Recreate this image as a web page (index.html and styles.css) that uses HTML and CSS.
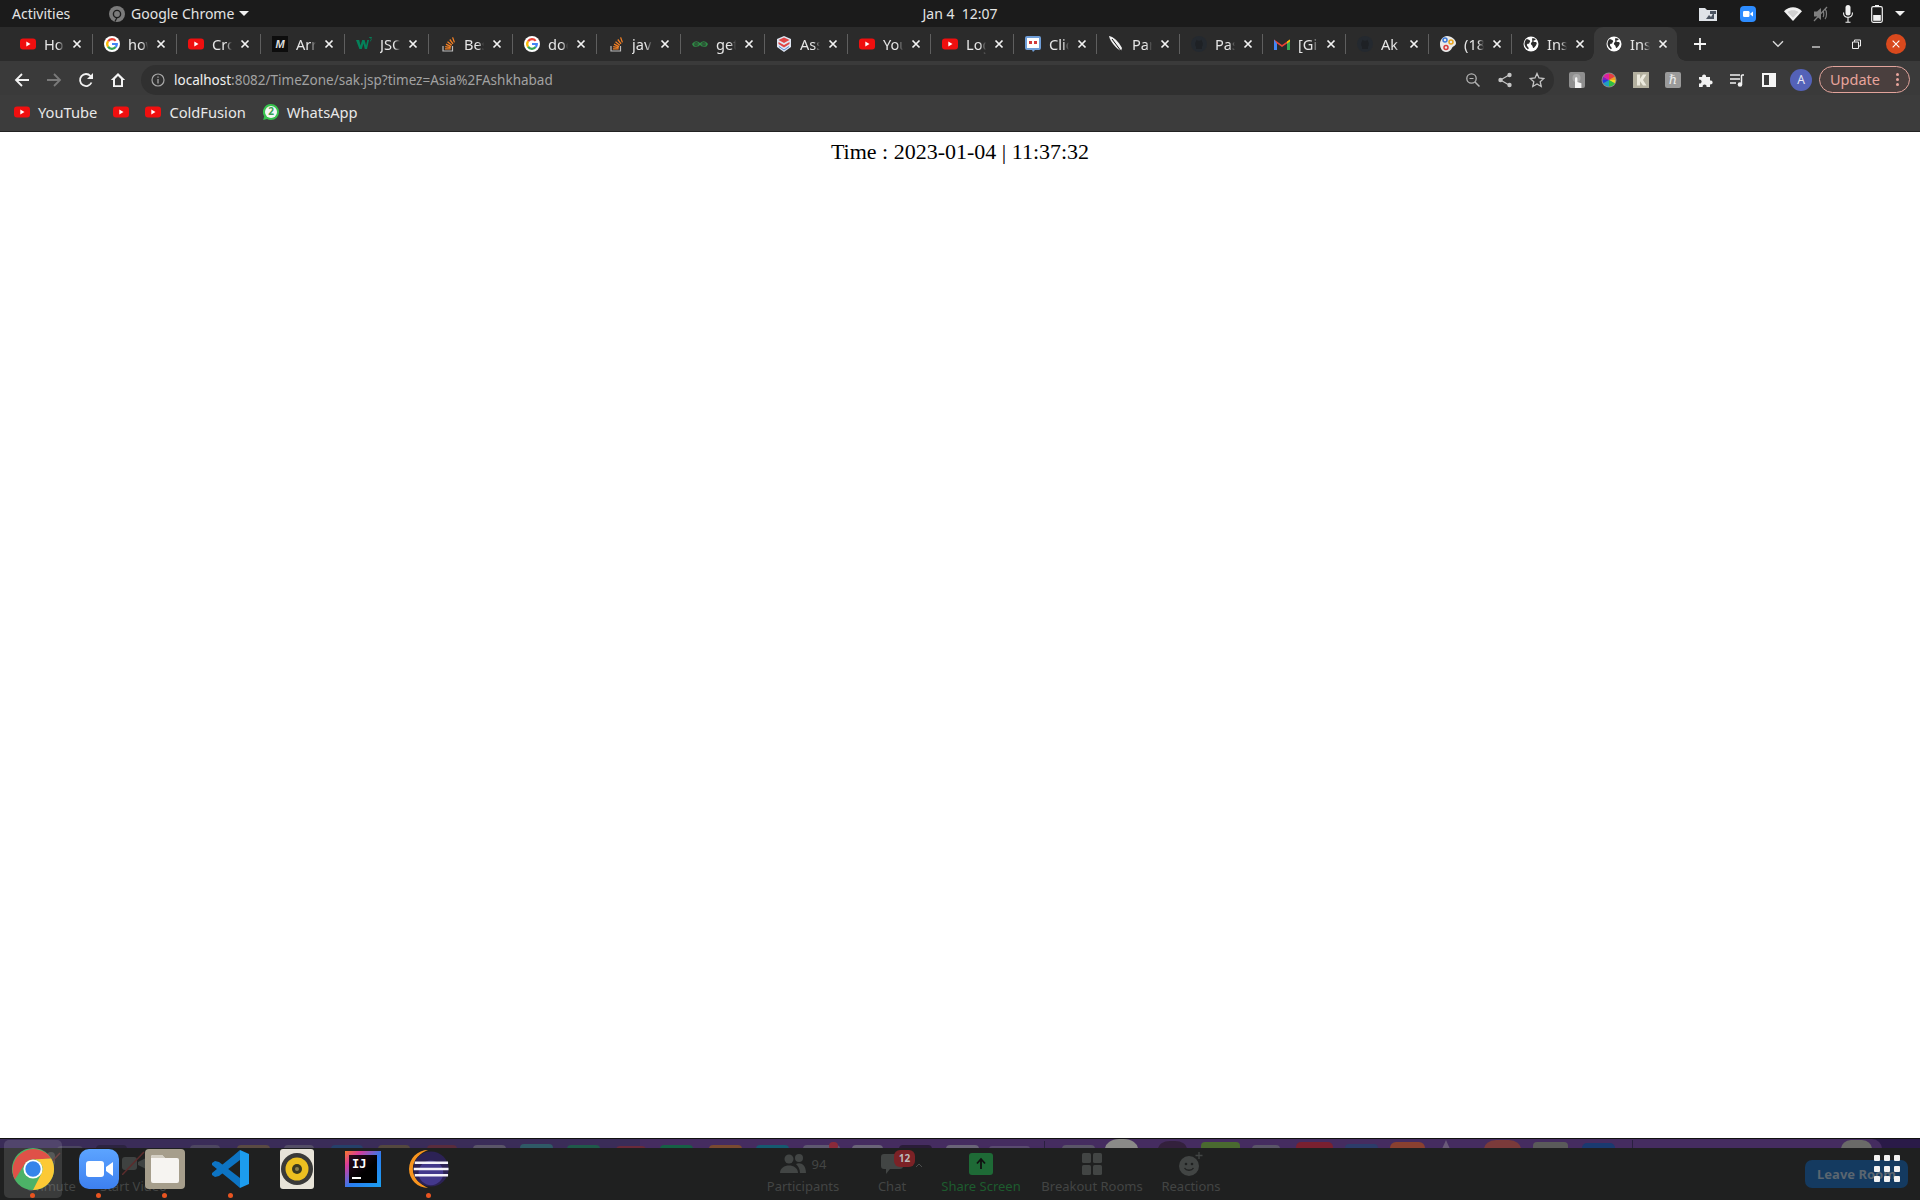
FILE: index.html
```html
<!DOCTYPE html>
<html lang="en">
<head>
<meta charset="utf-8">
<title>TimeZone</title>
<link rel="stylesheet" href="styles.css">
</head>
<body>
<svg class="defs" width="0" height="0" aria-hidden="true">
  <symbol id="yt" viewBox="0 0 16 16"><rect x="0" y="2.5" width="16" height="11" rx="3" fill="#f00f0f"/><path d="M6.3 5.6v4.8L10.5 8z" fill="#fff"/></symbol>
  <symbol id="goog" viewBox="0 0 16 16"><circle cx="8" cy="8" r="8" fill="#fff"/><g fill="none" stroke-width="2.200"><path d="M4.070 5.250A4.800 4.800 0 0 1 11.680 4.910" stroke="#ea4335"/><path d="M4.070 5.250A4.800 4.800 0 0 0 4.070 10.750" stroke="#fbbc05"/><path d="M4.070 10.750A4.800 4.800 0 0 0 11.700 11.050" stroke="#34a853"/><path d="M8 8H12.800A4.800 4.800 0 0 1 11.700 11.050" stroke="#4285f4"/></g></symbol>
  <symbol id="so" viewBox="0 0 16 16"><path d="M3 10v5h9.500v-5" fill="none" stroke="#bcbbbb" stroke-width="1.200"/><path d="M5 12.800h5.600M5.200 10.700l5.500 1M6 8.200l5 2.400M7.500 5.800l4.300 3.400M9.800 3.500l3.200 4.400M12.600 1.400l1.800 5" fill="none" stroke="#f48024" stroke-width="1.300"/></symbol>
  <symbol id="globe" viewBox="0 0 16 16"><circle cx="8" cy="8" r="7.500" fill="#fff"/><path d="M3 3.500c1.500-.5 3 .3 4 1.200.6 1-.6 1.400-.6 2.400s-1.800.2-2.400 1.400c-.6 1 1.200 2.400 1.600 3.200.3 1-.4 1.600-.8 1.600A6.600 6.600 0 0 1 3 3.500zM9.500 2c1 .7 2.700.4 3.200 1.400-.4 1-2 .5-2.400 1.400-.2.8 1 1.200 1.800 1.200s1.900.5 1.600 1.600c-.3 1.400-1.300 2.900-2.900 4.400-.9.2-1.200-1-1.300-2-.2-1-1.600-1-1.600-2.300 0-1.200 1-1.500 1.500-2.300C9.300 4.500 8.700 3 9.500 2z" fill="#2c2c2c"/></symbol>
  <symbol id="gh" viewBox="0 0 16 16"><circle cx="8" cy="8" r="8" fill="#24292f"/><path d="M5 13V10.800C3.800 9.500 4 6.500 5 5.500L5.500 3.800 7 4.800h2L10.500 3.800 11 5.500c1 1 1.200 4 0 5.300V13z" fill="#1e2125"/></symbol>
  <symbol id="x" viewBox="0 0 12 12"><path d="M2.500 2.500l7 7M9.500 2.500l-7 7" stroke="#f2f2f2" stroke-width="1.700" fill="none"/></symbol>
</svg>

<header class="topbar">
  <div class="top-left">
    <span class="activities">Activities</span>
    <svg class="chrome-glyph" viewBox="0 0 16 16"><circle cx="8" cy="8" r="8" fill="#7b7b7b"/><circle cx="8" cy="8" r="3.600" fill="none" stroke="#1c1c1c" stroke-width="1.400"/><path d="M8 11.600 6 15.600" stroke="#1c1c1c" stroke-width="1.200"/></svg>
    <span class="appname">Google Chrome</span>
    <span class="caret"></span>
  </div>
  <div class="clock">Jan 4&nbsp;&nbsp;12:07</div>
  <div class="tray">
    <svg class="tray-folder" viewBox="0 0 20 16"><path d="M1 2h6l2 2h10v11H1z" fill="#dfe3e8"/><path d="M8 13l3-4 2 2 3-5v7z" fill="#4a5360"/><rect x="12" y="5" width="6" height="3" fill="#4a5360"/></svg>
    <svg class="tray-zoom" viewBox="0 0 16 16"><rect width="16" height="16" rx="4" fill="#2d8cff"/><rect x="3" y="5" width="6.500" height="6" rx="1.200" fill="#fff"/><path d="M10.300 7.500 13 5.500v5l-2.700-2z" fill="#fff"/></svg>
    <svg class="tray-wifi" viewBox="0 0 18 14"><path d="M0 4.200C5-1 13-1 18 4.200L9 14z" fill="#f1f1f1"/><path d="M3.500 5C6.500 2.800 11.500 2.800 14.500 5L9 10.800z" fill="#1c1c1c" opacity=".15"/></svg>
    <svg class="tray-speaker" viewBox="0 0 16 16"><path d="M1 5.500h3L8 2v12l-4-3.500H1z" fill="#7f7f7f"/><path d="M10 5c1 1 1 5 0 6M12 3c2 2 2 8 0 10" stroke="#7f7f7f" stroke-width="1.200" fill="none"/><path d="M1 15 14 1" stroke="#7f7f7f" stroke-width="1.200"/></svg>
    <svg class="tray-mic" viewBox="0 0 12 18"><rect x="3.500" y="0" width="5" height="10.500" rx="2.500" fill="#f1f1f1"/><path d="M1.500 7.500c0 6.500 9 6.500 9 0M6 12.500V17M3.500 17.300h5" stroke="#f1f1f1" stroke-width="1.100" fill="none"/></svg>
    <svg class="tray-batt" viewBox="0 0 12 18"><rect x="4" y="0" width="4" height="2" fill="#f1f1f1"/><rect x=".7" y="1.700" width="10.600" height="15.600" rx="1.500" fill="none" stroke="#f1f1f1" stroke-width="1.200"/><rect x="2.200" y="10" width="7.600" height="5.800" fill="#f1f1f1"/></svg>
    <span class="caret tray-caret"></span>
  </div>
</header>

<nav class="tabstrip">
  <div class="tab"><svg class="fav"><use href="#yt"/></svg><span class="title">Ho</span><svg class="close"><use href="#x"/></svg><i class="sep"></i></div>
  <div class="tab"><svg class="fav"><use href="#goog"/></svg><span class="title">how</span><svg class="close"><use href="#x"/></svg><i class="sep"></i></div>
  <div class="tab"><svg class="fav"><use href="#yt"/></svg><span class="title">Cro</span><svg class="close"><use href="#x"/></svg><i class="sep"></i></div>
  <div class="tab"><span class="fav fav-m">M</span><span class="title">Arr</span><svg class="close"><use href="#x"/></svg><i class="sep"></i></div>
  <div class="tab"><svg class="fav" viewBox="0 0 16 16"><path d="M0 4h3.200l1.300 5.500L6.200 4h2.400l1.500 5.500L11.300 4H13l-2 9H8.800L7.400 7.500 5.800 13H3.400z" fill="#04825a"/><path d="M13.200 1.500h2.500l-1 1.400c1 .3.700 2-.8 2" fill="none" stroke="#04825a" stroke-width=".9"/></svg><span class="title">JSON</span><svg class="close"><use href="#x"/></svg><i class="sep"></i></div>
  <div class="tab"><svg class="fav"><use href="#so"/></svg><span class="title">Best</span><svg class="close"><use href="#x"/></svg><i class="sep"></i></div>
  <div class="tab"><svg class="fav"><use href="#goog"/></svg><span class="title">doc</span><svg class="close"><use href="#x"/></svg><i class="sep"></i></div>
  <div class="tab"><svg class="fav"><use href="#so"/></svg><span class="title">java</span><svg class="close"><use href="#x"/></svg><i class="sep"></i></div>
  <div class="tab"><svg class="fav" viewBox="0 0 16 16"><path d="M8 8c-1.500-3-6-3-7 0 0 3 5.500 3 7 0zm0 0c1.500-3 6-3 7 0 0 3-5.500 3-7 0zM0 8h16" fill="none" stroke="#2f8d46" stroke-width="1.200"/></svg><span class="title">get</span><svg class="close"><use href="#x"/></svg><i class="sep"></i></div>
  <div class="tab"><svg class="fav" viewBox="0 0 16 16"><path d="M8 0 15 3v8l-7 5-7-5V3z" fill="#dfe6f2"/><path d="M8 1.500 13.500 4 8 7 2.500 4z" fill="#e04545"/><path d="M2.500 6 8 9l5.500-3v2L8 11.500 2.500 8z" fill="#e04545"/><path d="M3 10.500 8 14l5-3.500" fill="none" stroke="#5a8ad0"/></svg><span class="title">Ass</span><svg class="close"><use href="#x"/></svg><i class="sep"></i></div>
  <div class="tab"><svg class="fav"><use href="#yt"/></svg><span class="title">You</span><svg class="close"><use href="#x"/></svg><i class="sep"></i></div>
  <div class="tab"><svg class="fav"><use href="#yt"/></svg><span class="title">Log</span><svg class="close"><use href="#x"/></svg><i class="sep"></i></div>
  <div class="tab"><svg class="fav" viewBox="0 0 16 16"><path d="M2 0h12a2 2 0 0 1 2 2v10a2 2 0 0 1-2 2h-4l-2 2-1-2H2a2 2 0 0 1-2-2V2a2 2 0 0 1 2-2z" fill="#6f9ed8"/><rect x="2" y="2" width="12" height="10" fill="#fff"/><rect x="4" y="5" width="3" height="3" fill="#d23a3a"/><rect x="9" y="5" width="3" height="3" fill="#d23a3a"/></svg><span class="title">Click</span><svg class="close"><use href="#x"/></svg><i class="sep"></i></div>
  <div class="tab"><svg class="fav" viewBox="0 0 16 16"><path d="M1 0c5 1 9 5 13 12l-1 3C9 13 2 6 1 0z" fill="#f2f2f2"/><path d="M4 3l9 12" stroke="#111" stroke-width="1"/></svg><span class="title">Par</span><svg class="close"><use href="#x"/></svg><i class="sep"></i></div>
  <div class="tab"><svg class="fav"><use href="#gh"/></svg><span class="title">Pas</span><svg class="close"><use href="#x"/></svg><i class="sep"></i></div>
  <div class="tab"><svg class="fav" viewBox="0 0 16 16"><path d="M0 3.500 8 9l8-5.500V14h-3V7.500L8 11 3 7.500V14H0z" fill="#ea4335"/><path d="M0 3.500V14h3V7.500z" fill="#4285f4"/><path d="M13 7.500V14h3V3.500z" fill="#34a853"/><path d="M13 7.500 16 5.500V3.500l-3 2z" fill="#fbbc05"/></svg><span class="title">[Git</span><svg class="close"><use href="#x"/></svg><i class="sep"></i></div>
  <div class="tab"><svg class="fav"><use href="#gh"/></svg><span class="title">Ak</span><svg class="close"><use href="#x"/></svg><i class="sep"></i></div>
  <div class="tab"><svg class="fav" viewBox="0 0 16 16"><path d="M7 0c5 0 9 4 9 7 0 3-3 3-4 5s-3 4-6 4C2 16 0 12 0 8s3-8 7-8z" fill="#e9e9e9"/><circle cx="5" cy="4" r="2" fill="none" stroke="#3a78d8" stroke-width="1.500"/><circle cx="11" cy="6" r="2" fill="none" stroke="#e8a41c" stroke-width="1.500"/><circle cx="6" cy="11.500" r="2" fill="none" stroke="#d83a3a" stroke-width="1.500"/></svg><span class="title">(18)</span><svg class="close"><use href="#x"/></svg><i class="sep"></i></div>
  <div class="tab nosep"><svg class="fav"><use href="#globe"/></svg><span class="title">Inst</span><svg class="close"><use href="#x"/></svg><i class="sep"></i></div>
  <div class="tab active nosep"><svg class="fav"><use href="#globe"/></svg><span class="title">Inst</span><svg class="close"><use href="#x"/></svg><i class="sep"></i></div>
  <svg class="newtab" viewBox="0 0 14 14"><path d="M7 1v12M1 7h12" stroke="#f5f5f5" stroke-width="1.800"/></svg>
  <svg class="tabsearch" viewBox="0 0 12 8"><path d="M1 1.200 6 6.300l5-5.100" fill="none" stroke="#d8d8d8" stroke-width="1.400"/></svg>
  <div class="winctl">
    <span class="winbtn"><svg class="winicon" viewBox="0 0 12 12"><path d="M2 9h8" stroke="#eee" stroke-width="1.200"/></svg></span>
    <span class="winbtn"><svg class="winicon" viewBox="0 0 12 12"><path d="M2.500 4h6v6.500h-6zM4.500 3.800V2h6v6h-1.800" fill="none" stroke="#eee" stroke-width="1"/></svg></span>
    <span class="winbtn"><span class="winclose"><svg class="winx" viewBox="0 0 12 12"><path d="M2 2l8 8M10 2l-8 8" stroke="#fff" stroke-width="1.300"/></svg></span></span>
  </div>
</nav>

<div class="toolbar">
  <span class="tbtn"><svg viewBox="0 0 16 16"><path d="M15 8H2M8 2 2 8l6 6" fill="none" stroke="#f2f2f2" stroke-width="1.800"/></svg></span>
  <span class="tbtn"><svg viewBox="0 0 16 16"><path d="M1 8h13M8 2l6 6-6 6" fill="none" stroke="#7a7a7a" stroke-width="1.800"/></svg></span>
  <span class="tbtn"><svg viewBox="0 0 16 16"><path d="M13.500 10.500A6 6 0 1 1 12.500 4L14.500 6" fill="none" stroke="#f2f2f2" stroke-width="1.800"/><path d="M15 1v6H9z" fill="#f2f2f2"/></svg></span>
  <span class="tbtn"><svg viewBox="0 0 16 16"><path d="M8 1 .8 8H3v7h10V8h2.200zM5 13.300V7l3-3 3 3v6.300z" fill="#f5f5f5"/></svg></span>
  <div class="omnibox">
    <svg class="info" viewBox="0 0 14 14"><circle cx="7" cy="7" r="6" fill="none" stroke="#a8a8a8" stroke-width="1.200"/><path d="M7 6v4.500M7 3.500v1.300" stroke="#a8a8a8" stroke-width="1.300"/></svg>
    <span class="url"><span class="host">localhost</span>:8082/TimeZone/sak.jsp?timez=Asia%2FAshkhabad</span>
    <svg class="omni-ic" viewBox="0 0 16 16"><circle cx="6.500" cy="6.500" r="4.700" fill="none" stroke="#b4b4b4" stroke-width="1.300"/><path d="M10 10l4.500 4.500" stroke="#b4b4b4" stroke-width="1.500"/><path d="M4.500 6.500h4" stroke="#b4b4b4"/></svg>
    <svg class="omni-ic" viewBox="0 0 16 16"><path d="M3.500 8 12 3M3.500 8l8.500 5" stroke="#c4c4c4" stroke-width="1.200"/><circle cx="3.500" cy="8" r="2.200" fill="#c4c4c4"/><circle cx="12.500" cy="3" r="2.200" fill="#c4c4c4"/><circle cx="12.500" cy="13" r="2.200" fill="#c4c4c4"/></svg>
    <svg class="omni-ic" viewBox="0 0 16 16"><path d="M8 1.500 10 6l4.800.5-3.600 3.200 1 4.800L8 12l-4.200 2.500 1-4.800L1.200 6.500 6 6z" fill="none" stroke="#c4c4c4" stroke-width="1.300"/></svg>
  </div>
  <div class="ext-row">
    <span class="tbtn"><svg viewBox="0 0 16 16"><rect width="16" height="16" rx="2" fill="#8f8f8f"/><circle cx="7.500" cy="6" r="4" fill="#a8a8a8"/><path d="M6 16V6.500a1.200 1.200 0 0 1 2.400 0V10l4 1.200V16z" fill="#f4f4f4"/></svg></span>
    <span class="tbtn"><svg viewBox="0 0 16 16"><circle cx="8" cy="8" r="7.500" fill="#8a8a8a"/><path d="M8 8V1.500a6.500 6.500 0 0 1 5.600 3.200z" fill="#e84040"/><path d="M8 8l5.600-3.300A6.500 6.500 0 0 1 14.500 8z" fill="#f0a020"/><path d="M8 8h6.500a6.500 6.500 0 0 1-.9 3.300z" fill="#f4e020"/><path d="M8 8l5.600 3.300A6.500 6.500 0 0 1 8 14.500z" fill="#30c040"/><path d="M8 8v6.500a6.500 6.500 0 0 1-5.600-3.200z" fill="#20a0c0"/><path d="M8 8l-5.600 3.300A6.500 6.500 0 0 1 1.500 8z" fill="#2040e0"/><path d="M8 8H1.500a6.500 6.500 0 0 1 .9-3.300z" fill="#8020c0"/><path d="M8 8 2.400 4.700A6.500 6.500 0 0 1 8 1.500z" fill="#e020a0"/></svg></span>
    <span class="tbtn"><svg viewBox="0 0 16 16"><rect width="16" height="16" fill="#b4b1a0"/><path d="M4 2.500h3v4.300L10 2.500h3.500L10 8l3.500 5.500H10L7 9.200v4.300H4z" fill="#eceade"/></svg></span>
    <span class="tbtn"><span class="ext-h">ℏ</span></span>
    <span class="tbtn"><svg viewBox="0 0 16 16"><path d="M2 5h3.200a2 2 0 1 1 3.800 0H13v3.500a2 2 0 1 1 0 3.800V15H9.500a2 2 0 1 0-3.800 0H2v-3.500a2 2 0 1 0 0-3.800z" fill="#f2f2f2"/></svg></span>
    <span class="tbtn"><svg viewBox="0 0 16 16"><path d="M1 3h10M1 7h10M1 11h6" stroke="#f2f2f2" stroke-width="1.500"/><path d="M12.500 3v9" stroke="#f2f2f2" stroke-width="1.500"/><circle cx="11" cy="12.500" r="2.300" fill="#f2f2f2"/><path d="M12.500 3H15" stroke="#f2f2f2" stroke-width="1.500"/></svg></span>
    <span class="tbtn"><svg viewBox="0 0 16 16"><path d="M1 1h14v14H1zM3 3v10h5V3z" fill="#f5f5f5" fill-rule="evenodd"/></svg></span>
    <span class="avatar">A</span>
  </div>
  <div class="update"><span class="update-text">Update</span><span class="dots"><i></i><i></i><i></i></span></div>
</div>

<div class="bookmarks">
  <svg class="bm-ic"><use href="#yt"/></svg><span class="bm-text">YouTube</span>
  <svg class="bm-ic bm-gap"><use href="#yt"/></svg>
  <svg class="bm-ic bm-gap"><use href="#yt"/></svg><span class="bm-text">ColdFusion</span>
  <svg class="bm-ic bm-gap-w" viewBox="0 0 16 16"><path d="M8 0a8 8 0 0 1 0 16c-1.500 0-2.800-.4-4-1l-3.800 1 1-3.700A8 8 0 0 1 8 0z" fill="#37c24d"/><circle cx="8" cy="8" r="6" fill="#f5f5f5"/><text class="wa-num" x="8" y="11.300" text-anchor="middle">2</text></svg><span class="bm-text">WhatsApp</span>
</div>

<main class="page">
  <p class="time">Time : 2023-01-04 | 11:37:32</p>
</main>

<footer class="desktop">
  <svg class="wallpaper" viewBox="0 0 1920 9" width="1920" height="9" preserveAspectRatio="none">
    <rect width="1920" height="9" fill="#2a1a48"/>
    <rect width="1882" height="24" rx="10" fill="#452c60"/>
    <rect width="640" height="9" fill="#3a2c58"/>
    <g transform="translate(0,2)">
      <rect x="57" y="5" width="26" height="10" rx="4" fill="#4b4560"/><rect x="96" y="4" width="31" height="10" rx="4" fill="#2c2340"/>
      <rect x="190" y="4" width="30" height="10" rx="4" fill="#4d4660"/><rect x="237" y="4" width="33" height="10" rx="4" fill="#5a4a42"/>
      <rect x="284" y="4" width="30" height="10" rx="4" fill="#544e66"/><rect x="331" y="4" width="32" height="10" rx="4" fill="#25406a"/>
      <rect x="378" y="4" width="32" height="10" rx="4" fill="#54483e"/><rect x="427" y="4" width="30" height="10" rx="4" fill="#5a2c3c"/>
      <rect x="473" y="4" width="33" height="10" rx="4" fill="#5a5568"/><rect x="520" y="3" width="33" height="10" rx="4" fill="#2f5a66"/>
      <rect x="567" y="4" width="33" height="10" rx="4" fill="#1f5a4a"/><rect x="616" y="5" width="30" height="10" rx="4" fill="#6a2a3a"/>
      <rect x="660" y="4" width="33" height="10" rx="4" fill="#166045"/><rect x="709" y="4" width="33" height="10" rx="4" fill="#7a4a30"/>
      <rect x="756" y="4" width="33" height="10" rx="4" fill="#155a70"/><rect x="803" y="4" width="37" height="10" rx="4" fill="#5e5870"/>
      <rect x="829" y="1" width="9" height="8" rx="4" fill="#8a2a3a"/><rect x="852" y="4" width="31" height="10" rx="4" fill="#6a6478"/>
      <rect x="899" y="4" width="33" height="10" rx="4" fill="#2a1c38"/><rect x="946" y="4" width="33" height="10" rx="4" fill="#6a6478"/>
      <rect x="989" y="5" width="41" height="10" rx="3" fill="#5a4a70"/><rect x="1044" y="0" width="1" height="8" fill="#2a2040"/>
      <rect x="1062" y="4" width="33" height="10" rx="4" fill="#5a5568"/><rect x="1105" y="-2" width="33" height="20" rx="14" fill="#8a8a88"/>
      <rect x="1158" y="0" width="29" height="16" rx="12" fill="#33203c"/><rect x="1201" y="1" width="39" height="10" rx="4" fill="#4a6a30"/>
      <rect x="1252" y="4" width="28" height="10" rx="4" fill="#5a5568"/><rect x="1296" y="1" width="37" height="10" rx="5" fill="#7a2030"/>
      <rect x="1345" y="3" width="33" height="10" rx="4" fill="#2c3c6a"/><rect x="1390" y="1" width="35" height="12" rx="6" fill="#8a4030"/>
      <path d="M1442 8l4-9 4 9z" fill="#6a5a78"/><rect x="1484" y="-1" width="37" height="18" rx="12" fill="#7a3a3a"/>
      <rect x="1533" y="1" width="35" height="10" rx="4" fill="#5a5a5a"/><rect x="1582" y="2" width="33" height="10" rx="5" fill="#1a3a70"/>
      <rect x="1632" y="-1" width="1" height="9" fill="#2a2040"/><rect x="1841" y="-1" width="31" height="18" rx="10" fill="#6a6a68"/>
    </g>
  </svg>
  <div class="dockwrap">
    <div class="ghost">
      <div class="g-mic"><svg class="g-ic" viewBox="0 0 24 24"><rect x="8" y="1" width="8" height="14" rx="4" fill="#3f4241"/><path d="M3 21 21 2" stroke="#5c2c2c" stroke-width="1.500"/></svg><span class="g-label">Unmute</span></div>
      <div class="g-video"><svg class="g-ic" viewBox="0 0 24 24"><rect x="0" y="6" width="15" height="13" rx="3" fill="#3f4241"/><path d="M16 11l8-4v11l-8-4z" fill="#3f4241"/><path d="M0 24 22 1" stroke="#5c2c2c" stroke-width="1.500"/></svg><span class="g-label">Start Video</span></div>
      <div class="g-item g-part"><div class="g-top"><svg class="g-ic" viewBox="0 0 26 22"><circle cx="9" cy="6" r="4.500" fill="#424544"/><circle cx="19" cy="5" r="4" fill="#424544"/><path d="M0 20c0-10 18-10 18 0z" fill="#424544"/><path d="M16 11c4-2 10 0 10 9h-6c0-4-2-7-4-9z" fill="#424544"/></svg><span class="g-count">94</span></div><span class="g-label">Participants</span></div>
      <div class="g-item g-chat"><div class="g-top"><svg class="g-ic" viewBox="0 0 22 20"><path d="M3 0h16a3 3 0 0 1 3 3v9a3 3 0 0 1-3 3H9l-4 5v-5H3a3 3 0 0 1-3-3V3a3 3 0 0 1 3-3z" fill="#424544"/></svg><span class="g-badge">12</span><svg class="g-chev" viewBox="0 0 8 5"><path d="M1 4l3-3 3 3" fill="none" stroke="#4c4e4d" stroke-width="1"/></svg></div><span class="g-label">Chat</span></div>
      <div class="g-item g-share"><div class="g-top"><svg class="g-ic" viewBox="0 0 24 22"><rect width="24" height="22" rx="3" fill="#1e6a36"/><path d="M12 16V7M8 10.500 12 6l4 4.500" fill="none" stroke="#111" stroke-width="1.800"/></svg></div><span class="g-label g-green">Share Screen</span></div>
      <div class="g-item g-rooms"><div class="g-top"><svg class="g-ic" viewBox="0 0 20 22"><rect width="9" height="10" rx="1.500" fill="#424544"/><rect x="11" width="9" height="10" rx="1.500" fill="#424544"/><rect y="12" width="9" height="10" rx="1.500" fill="#424544"/><rect x="11" y="12" width="9" height="10" rx="1.500" fill="#424544"/></svg></div><span class="g-label">Breakout Rooms</span></div>
      <div class="g-item g-react"><div class="g-top"><svg class="g-ic" viewBox="0 0 24 26"><circle cx="10" cy="15" r="10" fill="#424544"/><circle cx="7" cy="13" r="1.300" fill="#1f2020"/><circle cx="13" cy="13" r="1.300" fill="#1f2020"/><path d="M5.500 17c2 3 7 3 9 0" fill="none" stroke="#1f2020" stroke-width="1.300"/><path d="M20 1v7M16.500 4.500h7" stroke="#424544" stroke-width="1.300"/></svg></div><span class="g-label">Reactions</span></div>
      <div class="g-leave">Leave Room</div>
    </div>
    <div class="dock">
      <div class="dock-item running"><div class="dock-hi"></div>
        <svg class="dock-ic dock-chrome" viewBox="0 0 48 48"><circle cx="24" cy="24" r="22" fill="#34a853"/><path d="M15.300 19 5 35A22 22 0 0 1 43 13L24 14A10 10 0 0 0 15.300 19z" fill="#db3a2f"/><path d="M43 13A22 22 0 0 1 24 46L32.700 29A10 10 0 0 0 24 14z" fill="#fcc21a"/><circle cx="24" cy="24" r="10" fill="#fff"/><circle cx="24" cy="24" r="8" fill="#1a73e8"/></svg>
      </div>
      <div class="dock-item running">
        <svg class="dock-ic" viewBox="0 0 40 40"><defs><linearGradient id="zg" x1="0" y1="0" x2="0" y2="1"><stop offset="0" stop-color="#5ca4ff"/><stop offset="1" stop-color="#3d80f0"/></linearGradient></defs><rect width="40" height="40" rx="10" fill="url(#zg)"/><rect x="7" y="12" width="18" height="16" rx="3" fill="#fff"/><path d="M27 18l7-5v14l-7-5z" fill="#fff"/></svg>
      </div>
      <div class="dock-item running">
        <svg class="dock-ic" viewBox="0 0 40 40"><rect width="40" height="40" rx="4" fill="#a69e8c"/><path d="M6 8a2 2 0 0 1 2-2h9l3 3h12a2 2 0 0 1 2 2v21a2 2 0 0 1-2 2H8a2 2 0 0 1-2-2z" fill="#f6f4f1"/><path d="M6 8a2 2 0 0 1 2-2h9l3 3H6z" fill="#d4cfc4"/></svg>
      </div>
      <div class="dock-item running">
        <svg class="dock-ic" viewBox="0 0 40 40"><path d="M29 1V11L8 27 4 28 1 26V24L22 7z" fill="#0d74c4"/><path d="M29 39V29L8 13 4 12 1 14V16L22 33z" fill="#0d74c4"/><path d="M29 1 38 5V35L29 39z" fill="#1c9cee"/></svg>
      </div>
      <div class="dock-item">
        <svg class="dock-ic" viewBox="0 0 40 40"><rect x="3" width="34" height="40" rx="3" fill="#e8e4d8"/><circle cx="20" cy="20" r="16" fill="#3a3a38"/><circle cx="20" cy="20" r="11.500" fill="#ecc020"/><circle cx="20" cy="20" r="5" fill="#3a3a20"/><circle cx="20" cy="20" r="2" fill="#8a8050"/></svg>
      </div>
      <div class="dock-item">
        <div class="ij"><div class="ij-in"><span class="ij-t">IJ</span><i class="ij-line"></i></div></div>
      </div>
      <div class="dock-item running">
        <svg class="dock-ic" viewBox="0 0 42 40"><path d="M20 0A20 20 0 0 0 20 40C12 36 4 30 4 20S12 3 20 0z" fill="#f7941e"/><circle cx="23" cy="20" r="18.500" fill="#2c2255"/><circle cx="23" cy="24" r="13" fill="#43388c"/><path d="M6 13.500h35M5 20h36.500M6 26.500h35" stroke="#f4f2fa" stroke-width="2.500"/></svg>
      </div>
      <div class="appgrid"><i></i><i></i><i></i><i></i><i></i><i></i><i></i><i></i><i></i></div>
    </div>
  </div>
</footer>
</body>
</html>
```
FILE: styles.css
```css
* { box-sizing: border-box; }
html, body { margin: 0; padding: 0; height: 100%; }
body {
  width: 1920px;
  height: 1200px;
  overflow: hidden;
  display: flex;
  flex-direction: column;
  background: #fff;
  font-family: "Noto Sans", sans-serif;
}
.defs { position: absolute; }

/* GNOME top bar */
.topbar {
  height: 27px;
  flex: none;
  background: #1b1b1b;
  color: #e4e4e4;
  display: grid;
  grid-template-columns: 1fr auto 1fr;
  align-items: center;
  font-size: 14px;
}
.top-left { display: flex; align-items: center; padding-left: 12px; }
.activities { width: 97px; }
.chrome-glyph { width: 16px; height: 16px; }
.appname { margin-left: 6px; }
.caret {
  width: 0; height: 0;
  border-left: 5px solid transparent;
  border-right: 5px solid transparent;
  border-top: 5px solid #f0f0f0;
  margin-left: 5px;
}
.clock { font-size: 14px; }
.tray { display: flex; align-items: center; justify-content: flex-end; padding-right: 15px; }
.tray-folder { width: 20px; height: 16px; }
.tray-zoom { width: 16px; height: 16px; margin-left: 22px; }
.tray-wifi { width: 18px; height: 14px; margin-left: 28px; }
.tray-speaker { width: 16px; height: 16px; margin-left: 11px; }
.tray-mic { width: 12px; height: 18px; margin-left: 13px; }
.tray-batt { width: 12px; height: 18px; margin-left: 17px; }
.tray-caret { margin-left: 12px; }

/* Tab strip */
.tabstrip {
  height: 34px;
  flex: none;
  background: #2b2b2b;
  display: flex;
  align-items: center;
  padding-left: 8px;
}
.tab {
  width: 83px;
  height: 34px;
  flex: none;
  display: flex;
  align-items: center;
  padding-left: 12px;
  color: #e6e6e6;
  font-size: 14.6px;
  position: relative;
}
.tab:nth-child(-n+9) { width: 84px; }
.fav { width: 16px; height: 16px; flex: none; }
.fav-m {
  background: #0d0d0d;
  color: #ddd;
  font: italic 700 11px/16px "Liberation Sans", sans-serif;
  text-align: center;
}
.title {
  width: 20px;
  margin-left: 8px;
  margin-bottom: 1px;
  overflow: hidden;
  white-space: nowrap;
  flex: none;
  -webkit-mask-image: linear-gradient(90deg, #000 70%, transparent 100%);
  mask-image: linear-gradient(90deg, #000 70%, transparent 100%);
}
.close { width: 12px; height: 12px; margin-left: 7px; flex: none; }
.sep {
  width: 1px;
  height: 20px;
  background: #5f5f5f;
  margin-left: auto;
  margin-right: -1px;
  flex: none;
}
.nosep .sep { background: transparent; }
.active { background: #3a3a3a; border-radius: 9px 9px 0 0; }
.active::before, .active::after {
  content: "";
  position: absolute;
  bottom: 0;
  width: 9px;
  height: 9px;
  background: radial-gradient(circle at 0 0, transparent 8.5px, #3a3a3a 9px);
}
.active::before { left: -9px; }
.active::after { right: -9px; background: radial-gradient(circle at 100% 0, transparent 8.5px, #3a3a3a 9px); }
.newtab { width: 14px; height: 14px; margin-left: 16px; flex: none; }
.tabsearch { width: 12px; height: 8px; margin-left: 65px; flex: none; }
.winctl { display: flex; margin-left: 12px; }
.winbtn { width: 40px; height: 34px; display: flex; align-items: center; justify-content: center; }
.winicon { width: 12px; height: 12px; }
.winclose {
  width: 20px; height: 20px; border-radius: 50%;
  background: #d9491d;
  display: flex; align-items: center; justify-content: center;
}
.winx { width: 10px; height: 10px; }

/* Toolbar */
.toolbar {
  height: 34px;
  flex: none;
  background: #3a3a3a;
  display: flex;
  align-items: flex-end;
  padding-left: 6px;
}
.tbtn {
  width: 32px;
  height: 30px;
  flex: none;
  display: flex;
  align-items: center;
  justify-content: center;
}
.tbtn svg { width: 16px; height: 16px; }
.omnibox {
  width: 1413px;
  height: 30px;
  flex: none;
  margin-left: 7px;
  background: #303030;
  border-radius: 15px;
  display: flex;
  align-items: center;
  padding-left: 10px;
  padding-right: 9px;
}
.info { width: 14px; height: 14px; flex: none; }
.url { margin-left: 9px; margin-bottom: 1px; font-size: 13.5px; color: #a2a2a2; flex: 1; white-space: nowrap; }
.host { color: #f0f0f0; }
.omni-ic { width: 16px; height: 16px; margin-left: 16px; flex: none; }
.ext-row { display: flex; align-items: center; margin-left: 7px; }
.ext-h {
  width: 16px; height: 16px; border-radius: 2px;
  background: #9a9a9a; color: #eee;
  font: 13px/16px "DejaVu Serif", serif;
  text-align: center;
}
.avatar {
  width: 22px; height: 22px; margin: 0 5px;
  border-radius: 50%;
  background: #5462b8; color: #e8e8f4;
  font-size: 12px; line-height: 22px; text-align: center;
}
.update {
  width: 91px; height: 27px;
  flex: none;
  margin-left: 2px;
  margin-bottom: 2px;
  border: 1px solid #e2a49c;
  border-radius: 14px;
  background: #4a3f3e;
  color: #e8a49c;
  font-size: 14.500px;
  display: flex;
  align-items: center;
  padding-left: 10px;
  padding-bottom: 1px;
}
.dots { display: flex; flex-direction: column; gap: 2px; margin-left: 16px; }
.dots i { width: 3px; height: 3px; border-radius: 50%; background: #e8a49c; }

/* Bookmarks */
.bookmarks {
  height: 37px;
  flex: none;
  background: #3c3c3c;
  border-bottom: 1px solid #222;
  display: flex;
  align-items: center;
  padding-left: 14px;
  padding-bottom: 2px;
  color: #e8e8e8;
  font-size: 14.700px;
}
.bm-ic { width: 16px; height: 16px; flex: none; }
.bm-text { margin-left: 8px; }
.bm-gap { margin-left: 16px; }
.bm-gap-w { margin-left: 17px; }
.wa-num { font: 700 10px "Noto Sans", sans-serif; fill: #37a24d; }

/* Page */
.page { flex: 1; background: #fff; padding-top: 7px; }
.time {
  margin: 0;
  text-align: center;
  font-family: "Liberation Serif", serif;
  font-size: 22px;
  line-height: 25px;
  color: #000;
}

/* Desktop strip + dock */
.desktop { flex: none; height: 62px; border-top: 1px solid #111; background: #1f2020; display: flex; flex-direction: column; }
.wallpaper { display: block; flex: none; }
.dockwrap { position: relative; flex: 1; background: #1f2020; }
.dock { position: relative; height: 40px; margin-top: 1px; display: flex; }
.dock-item {
  width: 66px; height: 40px; flex: none;
  display: flex; align-items: center; justify-content: center;
  position: relative;
}
.dock-ic { width: 40px; height: 40px; flex: none; }
.dock-chrome { width: 46px; height: 46px; }
.dock-hi {
  position: absolute;
  left: 4px; top: -9px;
  width: 58px; height: 58px;
  border-radius: 5px;
  background: rgba(255,255,255,.12);
}
.running::after {
  content: "";
  position: absolute;
  left: 30px; top: 44px;
  width: 5px; height: 5px;
  border-radius: 50%;
  background: #e95420;
}
.ij {
  width: 36px; height: 36px;
  padding: 4px;
  background: linear-gradient(135deg, #f97a2a 0%, #d93a9a 22%, #2a7df0 55%, #1aa0f0 100%);
}
.ij-in { width: 28px; height: 28px; background: linear-gradient(135deg,#2a0a20,#000 60%); padding: 2px 3px; display: flex; flex-direction: column; }
.ij-t { font: 700 12px/14px "DejaVu Sans Mono", monospace; color: #fff; letter-spacing: 0; }
.ij-line { width: 9px; height: 2px; background: #fff; margin-top: 6px; display: block; }
.appgrid {
  margin-left: auto;
  margin-right: 20px;
  margin-top: 6px;
  width: 26px;
  height: 27px;
  display: grid;
  grid-template-columns: repeat(3, 6px);
  grid-template-rows: repeat(3, 6px);
  justify-content: space-between;
  align-content: space-between;
}
.appgrid i { background: #f2f2f2; border-radius: 1px; }

/* Dimmed Zoom toolbar behind the dock */
.ghost { position: absolute; inset: 0; font-size: 13px; color: #434544; }
.ghost > div { position: absolute; }
.g-label { white-space: nowrap; }
.g-item { display: flex; flex-direction: column; align-items: center; top: 3px; }
.g-top { height: 26px; display: flex; align-items: center; position: relative; }
.g-ic { display: block; }
.g-part { left: 767px; width: 72px; }
.g-part .g-ic { width: 26px; height: 22px; }
.g-count { margin-left: 6px; }
.g-chat { left: 872px; width: 40px; }
.g-chat .g-ic { width: 22px; height: 20px; }
.g-badge {
  position: absolute;
  left: 13px; top: -1px;
  width: 21px; height: 17px;
  border-radius: 6px;
  background: #7b2226;
  color: #bbb;
  font: 700 10px/17px "Noto Sans", sans-serif;
  text-align: center;
}
.g-chev { position: absolute; left: 34px; top: 12px; width: 8px; height: 5px; }
.g-share { left: 941px; width: 80px; }
.g-share .g-ic { width: 24px; height: 22px; }
.g-green { color: #1d5c2e; }
.g-rooms { left: 1042px; width: 100px; }
.g-rooms .g-ic { width: 20px; height: 22px; }
.g-react { left: 1162px; width: 58px; }
.g-react .g-ic { width: 24px; height: 26px; }
.g-mic { left: 28px; top: 3px; display: flex; flex-direction: column; align-items: center; width: 46px; }
.g-video { left: 100px; top: 3px; width: 67px; display: flex; flex-direction: column; align-items: center; }
.g-mic .g-ic, .g-video .g-ic { width: 24px; height: 24px; margin-bottom: 2px; }
.g-leave {
  left: 1805px; top: 12px;
  width: 103px; height: 28px;
  border-radius: 7px;
  background: #143a60;
  color: #5b6670;
  font: 700 13px/28px "Noto Sans", sans-serif;
  text-align: center;
}
```
